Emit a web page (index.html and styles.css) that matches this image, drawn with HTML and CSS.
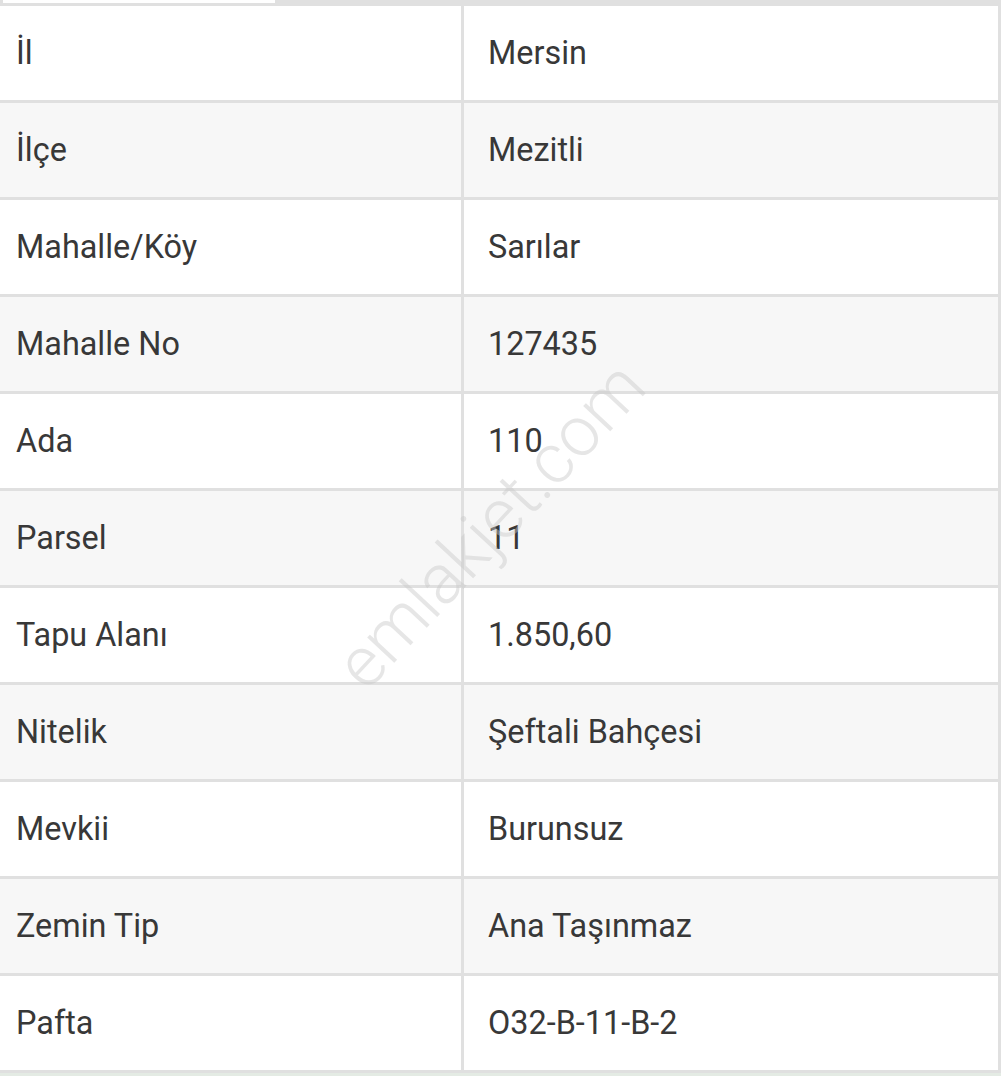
FILE: index.html
```html
<!DOCTYPE html>
<html lang="tr">
<head>
<meta charset="utf-8">
<title>Tapu Bilgileri</title>
<link rel="stylesheet" href="styles.css">
</head>
<body>
<div class="page">
  <div class="topbar"><div class="tab"></div></div>
  <div class="info">
    <div class="row"><div class="key">İl</div><div class="val">Mersin</div></div>
    <div class="row alt"><div class="key">İlçe</div><div class="val">Mezitli</div></div>
    <div class="row"><div class="key">Mahalle/Köy</div><div class="val">Sarılar</div></div>
    <div class="row alt"><div class="key">Mahalle No</div><div class="val">127435</div></div>
    <div class="row"><div class="key">Ada</div><div class="val">110</div></div>
    <div class="row alt"><div class="key">Parsel</div><div class="val">11</div></div>
    <div class="row"><div class="key">Tapu Alanı</div><div class="val">1.850,60</div></div>
    <div class="row alt"><div class="key">Nitelik</div><div class="val">Şeftali Bahçesi</div></div>
    <div class="row"><div class="key">Mevkii</div><div class="val">Burunsuz</div></div>
    <div class="row alt"><div class="key">Zemin Tip</div><div class="val">Ana Taşınmaz</div></div>
    <div class="row"><div class="key">Pafta</div><div class="val">O32-B-11-B-2</div></div>
  </div>
  <div class="watermark">emlakjet.com</div>
</div>
</body>
</html>
```

FILE: styles.css
```css
html {
  background: #e4ebe4;
}
body {
  margin: 0;
  font-family: Roboto, "Noto Sans", sans-serif;
  color: #383838;
}
.page {
  position: relative;
  width: 1001px;
  overflow: hidden;
}
.topbar {
  height: 6px;
  background: #e0e0e0;
}
.tab {
  width: 272px;
  height: 3px;
  margin-left: 3px;
  background: #ffffff;
}
.info {
  display: flex;
  flex-direction: column;
  border-right: 3px solid #e0e0e0;
}
.row {
  display: grid;
  grid-template-columns: 464px 1fr;
  height: 97px;
  box-sizing: border-box;
  border-bottom: 3px solid #e0e0e0;
  background: #ffffff;
}
.row.alt {
  background: #f7f7f7;
}
.key, .val {
  display: flex;
  align-items: center;
  font-size: 32.4px;
  line-height: 1;
}
.key {
  padding-left: 16px;
  border-right: 3px solid #e0e0e0;
}
.val {
  padding-left: 24px;
}
.watermark {
  position: absolute;
  left: 490px;
  top: 525px;
  transform: translate(-50%, -50%) rotate(-47deg);
  font-size: 70px;
  font-weight: 300;
  color: rgba(200, 200, 200, 0.45);
  white-space: nowrap;
  pointer-events: none;
}
```
